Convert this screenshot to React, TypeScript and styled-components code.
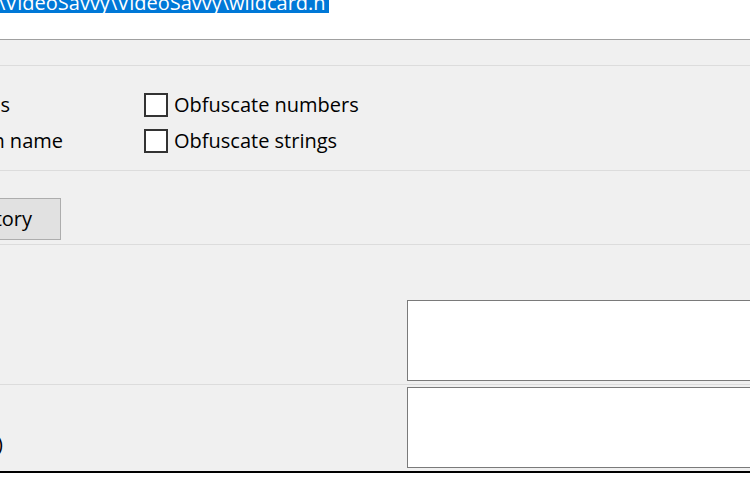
import React from 'react';
import styled, { createGlobalStyle } from 'styled-components';

const Global = createGlobalStyle`
  html, body { margin: 0; padding: 0; background: #ffffff; overflow: hidden; }
  body { font-family: "Open Sans", "Noto Sans", sans-serif; font-size: 20px; color: #000; }
`;

const Page = styled.div`
  width: 750px;
  height: 500px;
  overflow: hidden;
  display: flex;
  flex-direction: column;
`;

const PathField = styled.div`
  height: 39px;
  flex-shrink: 0;
  background: #ffffff;
  border-bottom: 1px solid #a0a0a0;
  overflow: hidden;
  white-space: nowrap;
`;

const Selection = styled.div`
  width: fit-content;
  margin-top: -7px;
  margin-left: -2px;
  padding-right: 3px;
  line-height: 20px;
  font-size: 20px;
  background: #0078d7;
  color: #ffffff;
`;

const Panel = styled.div`
  flex-shrink: 0;
  background: #f0f0f0;
  display: flex;
  flex-direction: column;
  border-bottom: 2px solid #000000;
`;

const Section = styled.div<{ $h: number; $pt?: number }>`
  height: ${(p) => p.$h}px;
  padding-top: ${(p) => p.$pt ?? 0}px;
  box-sizing: border-box;
  border-bottom: 1px solid #dcdcdc;
  flex-shrink: 0;
  overflow: hidden;
`;

const OptionsGrid = styled.div`
  display: grid;
  grid-template-columns: 144px 1fr;
  row-gap: 12px;
`;

const ClipEnd = styled.div<{ $w: number }>`
  width: ${(p) => p.$w}px;
  display: flex;
  justify-content: flex-end;
  overflow: hidden;
  white-space: nowrap;
`;

const CheckOption = styled.label`
  display: flex;
  align-items: center;
  gap: 6px;
  height: 24px;
  flex-shrink: 0;
  white-space: nowrap;
  line-height: 26px;
`;

const Box = styled.span`
  width: 24px;
  height: 24px;
  box-sizing: border-box;
  border: 2px solid #333333;
  background: #ffffff;
  flex-shrink: 0;
`;

const Button = styled.button`
  flex-shrink: 0;
  height: 42px;
  padding: 0 28px;
  box-sizing: border-box;
  background: #e1e1e1;
  border: 1px solid #adadad;
  border-radius: 0;
  font-family: inherit;
  font-size: 20px;
  color: #000;
  line-height: 26px;
  white-space: nowrap;
`;

const FieldRow = styled.div<{ $h: number; $pt: number; $last?: boolean }>`
  height: ${(p) => p.$h}px;
  padding-top: ${(p) => p.$pt}px;
  box-sizing: border-box;
  display: flex;
  border-bottom: ${(p) => (p.$last ? 'none' : '1px solid #dcdcdc')};
  flex-shrink: 0;
`;

const LabelCell = styled.div`
  width: 407px;
  flex-shrink: 0;
  display: flex;
  align-items: flex-end;
  padding-bottom: 14px;
  box-sizing: border-box;
`;

const RowLabel = styled.span`
  flex-shrink: 0;
  line-height: 26px;
  color: #000;
`;

const TextBox = styled.textarea`
  width: 400px;
  height: 81px;
  box-sizing: border-box;
  border: 1px solid #7a7a7a;
  background: #ffffff;
  resize: none;
  margin: 0;
  padding: 0;
  flex-shrink: 0;
  font-family: inherit;
  outline: none;
`;

const Check = ({ label }: { label: string }) => (
  <CheckOption>
    <Box />
    <span>{label}</span>
  </CheckOption>
);

export default function App() {
  return (
    <>
      <Global />
      <Page>
        <PathField>
          <Selection>\VideoSavvy\VideoSavvy\wildcard.h</Selection>
        </PathField>
        <Panel>
          <Section $h={26} />
          <Section $h={105} $pt={27}>
            <OptionsGrid>
              <ClipEnd $w={10}>
                <Check label="Obfuscate variables" />
              </ClipEnd>
              <Check label="Obfuscate numbers" />
              <ClipEnd $w={63}>
                <Check label="Obfuscate function name" />
              </ClipEnd>
              <Check label="Obfuscate strings" />
            </OptionsGrid>
          </Section>
          <Section $h={74} $pt={27}>
            <ClipEnd $w={61}>
              <Button>Select output directory</Button>
            </ClipEnd>
          </Section>
          <FieldRow $h={140} $pt={55}>
            <LabelCell />
            <TextBox />
          </FieldRow>
          <FieldRow $h={86} $pt={2} $last>
            <LabelCell>
              <ClipEnd $w={3}>
                <RowLabel>Extra code (optional)</RowLabel>
              </ClipEnd>
            </LabelCell>
            <TextBox />
          </FieldRow>
        </Panel>
      </Page>
    </>
  );
}
